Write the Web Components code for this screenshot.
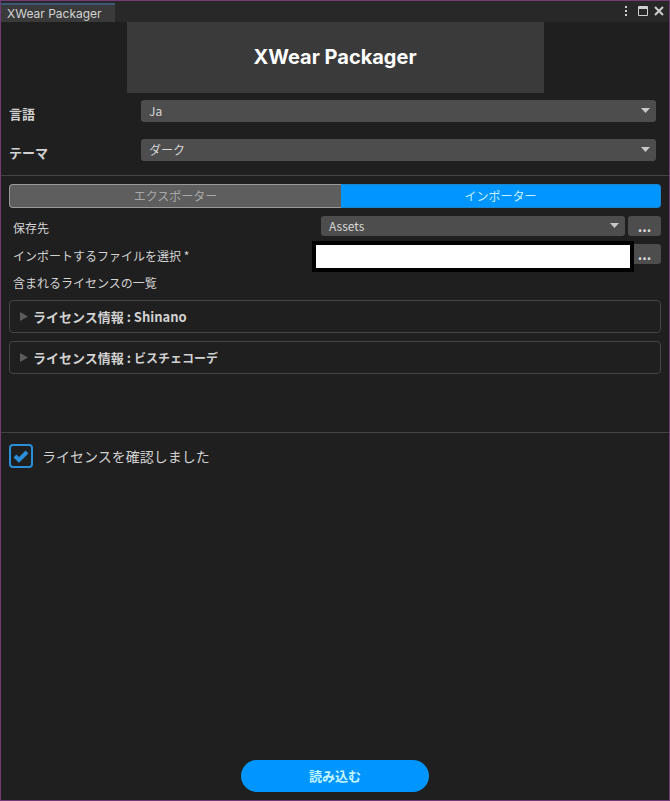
<!DOCTYPE html>
<html lang="ja">
<head>
<meta charset="UTF-8">
<meta name="viewport" content="width=device-width, initial-scale=1.0">
<title>XWear Packager</title>
<style>
    body {
        margin: 0;
        background: #1f1f1f;
        color: #d2d2d2;
        font: 12px/20px "Noto Sans CJK JP", sans-serif;
    }
    .product { font-size: 12px; }
</style>
</head>
<body>
<editor-window title-text="XWear Packager">
    <app-banner>XWear Packager</app-banner>
    <setting-row label="言語" value="Ja"></setting-row>
    <setting-row label="テーマ" value="ダーク"></setting-row>
    <panel-section>
        <mode-tabs></mode-tabs>
        <path-row label="保存先" value="Assets"></path-row>
        <path-row label="インポートするファイルを選択 *" type="file"></path-row>
        <license-list heading="含まれるライセンスの一覧">
            <license-item>ライセンス情報 : Shinano</license-item>
            <license-item>ライセンス情報 : <span class="product">ビスチェコーデ</span></license-item>
        </license-list>
    </panel-section>
    <panel-section>
        <confirm-check>ライセンスを確認しました</confirm-check>
    </panel-section>
    <load-button slot="footer">読み込む</load-button>
</editor-window>

<script>
// shared look of the drop-downs
const selectStyles = `
    .select { position: relative; display: flex; }
    .select::after {
        content: '';
        position: absolute;
        right: 6px;
        top: 50%;
        margin-top: -3px;
        width: 9px;
        height: 5px;
        background: #c8c8c8;
        clip-path: polygon(0 0, 100% 0, 50% 100%);
        pointer-events: none;
    }
    select {
        appearance: none;
        flex: 1;
        min-width: 0;
        margin: 0;
        padding: 0 20px 0 8px;
        border: 0;
        border-radius: 3px;
        background: #4d4d4d;
        color: #d8d8d8;
        font: inherit;
    }
`;

class EditorWindow extends HTMLElement {
    connectedCallback() {
        this.attachShadow({ mode: 'open' });
        this.shadowRoot.innerHTML = `
            <style>
                :host {
                    display: flex;
                    flex-direction: column;
                    box-sizing: border-box;
                    min-height: 100vh;
                    border: 1px solid #733a78;
                }
                header {
                    display: flex;
                    align-items: flex-start;
                    justify-content: space-between;
                    height: 21px;
                    background: #282828;
                }
                .tab {
                    box-sizing: border-box;
                    height: 19px;
                    margin-top: 2px;
                    padding: 0 13px 0 6px;
                    border-top: 2px solid #3c5878;
                    background: #3a3a3a;
                    font: 12px/17px Inter, sans-serif;
                }
                .controls { display: flex; height: 20px; align-items: center; gap: 4px; padding-right: 4px; }
                button { display: flex; padding: 0; border: 0; background: none; color: #cfcfcf; }
                .dots { margin-right: 5px; }
                main { flex: 1; }
                footer { display: flex; justify-content: center; padding: 8px; }
            </style>
            <header>
                <div class="tab">${this.getAttribute('title-text')}</div>
                <div class="controls">
                    <button class="dots" aria-label="Menu">
                        <svg width="4" height="12" fill="currentColor"><path d="M1 1h2v2H1zM1 5h2v2H1zM1 9h2v2H1z"/></svg>
                    </button>
                    <button aria-label="Maximize">
                        <svg width="12" height="12" fill="currentColor" fill-rule="evenodd"><path d="M2 1h8q1 0 1 1v8q0 1-1 1H2q-1 0-1-1V2q0-1 1-1zM2 4v6h8V4z"/></svg>
                    </button>
                    <button aria-label="Close">
                        <svg width="12" height="12" fill="none" stroke="currentColor" stroke-width="2"><path d="M2 2l8 8M10 2l-8 8"/></svg>
                    </button>
                </div>
            </header>
            <main><slot></slot></main>
            <footer><slot name="footer"></slot></footer>
        `;
    }
}

class AppBanner extends HTMLElement {
    connectedCallback() {
        this.attachShadow({ mode: 'open' });
        this.shadowRoot.innerHTML = `
            <style>
                :host { display: flex; justify-content: center; }
                h1 {
                    width: 417px;
                    max-width: 100%;
                    margin: 0;
                    background: #3a3a3a;
                    color: #fff;
                    font: bold 20px/71px Inter, sans-serif;
                    text-align: center;
                }
            </style>
            <h1><slot></slot></h1>
        `;
    }
}

class SettingRow extends HTMLElement {
    connectedCallback() {
        this.attachShadow({ mode: 'open' });
        this.shadowRoot.innerHTML = `
            <style>
                ${selectStyles}
                :host { display: block; padding: 7px 13px 10px 8px; }
                .row { display: flex; }
                label { flex: 0 0 132px; padding-top: 4px; font-size: 13px; font-weight: bold; line-height: 20px; }
                .select { flex: 1; height: 22px; }
                .row { height: 22px; }
            </style>
            <div class="row">
                <label for="field">${this.getAttribute('label')}</label>
                <div class="select">
                    <select id="field"><option>${this.getAttribute('value')}</option></select>
                </div>
            </div>
        `;
    }
}

class PanelSection extends HTMLElement {
    connectedCallback() {
        this.attachShadow({ mode: 'open' });
        this.shadowRoot.innerHTML = `
            <style>
                :host {
                    display: flex;
                    flex-direction: column;
                    gap: 8px;
                    margin-top: 4px;
                    padding: 8px 8px 0;
                    border-top: 1px solid #444;
                }
            </style>
            <slot></slot>
        `;
    }
}

class ModeTabs extends HTMLElement {
    connectedCallback() {
        this.attachShadow({ mode: 'open' });
        this.shadowRoot.innerHTML = `
            <style>
                :host { display: flex; }
                button {
                    flex: 83 1 0;
                    height: 24px;
                    padding: 0;
                    border: 1px solid #999;
                    border-right: 0;
                    border-radius: 4px 0 0 4px;
                    background: #5e5e5e;
                    color: #a8a8a8;
                    font: inherit;
                }
                button.active {
                    flex-grow: 80;
                    border: 1px solid #1a86d0;
                    border-left: 0;
                    border-radius: 0 4px 4px 0;
                    background: #0095ff;
                    color: #c4f0ff;
                }
            </style>
            <button>エクスポーター</button>
            <button class="active">インポーター</button>
        `;
    }
}

class PathRow extends HTMLElement {
    connectedCallback() {
        const isFile = this.getAttribute('type') === 'file';
        this.attachShadow({ mode: 'open' });
        this.shadowRoot.innerHTML = `
            <style>
                ${selectStyles}
                :host { display: flex; height: 20px; }
                label { flex: 77 1 0; padding: 2px 0 0 4px; box-sizing: border-box; white-space: nowrap; }
                .field { flex: 85 1 0; display: flex; gap: 3px; }
                .select, .file { flex: 1; position: relative; }
                /* the file box is taller than its row and lies over the button's edge */
                input {
                    position: absolute;
                    top: -3px;
                    left: -9px;
                    z-index: 1;
                    box-sizing: border-box;
                    width: calc(100% + 18px);
                    height: 31px;
                    padding: 0 4px;
                    border: 4px solid #000;
                    border-radius: 0;
                    background: #fff;
                    font: inherit;
                }
                button {
                    width: 33px;
                    padding: 0;
                    border: 0;
                    border-radius: 3px;
                    background: #4d4d4d;
                    color: #d8d8d8;
                    font: bold 14px/20px "Noto Sans CJK JP", sans-serif;
                }
            </style>
            <label for="field">${this.getAttribute('label')}</label>
            <div class="field">
                ${isFile
                    ? '<div class="file"><input id="field" type="text"></div>'
                    : `<div class="select"><select id="field"><option>${this.getAttribute('value')}</option></select></div>`}
                <button>...</button>
            </div>
        `;
    }
}

class LicenseList extends HTMLElement {
    connectedCallback() {
        this.attachShadow({ mode: 'open' });
        this.shadowRoot.innerHTML = `
            <style>
                :host {
                    display: flex;
                    flex-direction: column;
                    gap: 8px;
                    min-height: 156px;
                }
                h2 { margin: 0; padding: 1px 4px 0; font-size: 12px; font-weight: normal; line-height: 19px; }
            </style>
            <h2>${this.getAttribute('heading')}</h2>
            <slot></slot>
        `;
    }
}

class LicenseItem extends HTMLElement {
    connectedCallback() {
        this.attachShadow({ mode: 'open' });
        this.shadowRoot.innerHTML = `
            <style>
                :host { display: block; border: 1px solid #444; border-radius: 4px; }
                summary {
                    display: flex;
                    align-items: center;
                    gap: 5px;
                    padding: 0 10px;
                    font-size: 13px;
                    font-weight: bold;
                    line-height: 31px;
                    cursor: pointer;
                }
                summary::before {
                    content: '';
                    width: 8px;
                    height: 9px;
                    background: #5c5c5c;
                    clip-path: polygon(0 0, 100% 50%, 0 100%);
                }
                details[open] summary::before { transform: rotate(90deg); }
            </style>
            <details><summary><span><slot></slot></span></summary></details>
        `;
    }
}

class ConfirmCheck extends HTMLElement {
    connectedCallback() {
        this.attachShadow({ mode: 'open' });
        this.shadowRoot.innerHTML = `
            <style>
                :host { display: block; padding-top: 3px; }
                label { display: flex; align-items: center; gap: 9px; font-size: 14px; line-height: 24px; }
                .box { display: grid; }
                input, svg { grid-area: 1 / 1; }
                input {
                    appearance: none;
                    box-sizing: border-box;
                    width: 24px;
                    height: 24px;
                    margin: 0;
                    border: 2px solid #2a8fd8;
                    border-radius: 4px;
                }
                svg { visibility: hidden; pointer-events: none; }
                input:checked + svg { visibility: visible; }
            </style>
            <label>
                <span class="box">
                    <input type="checkbox" checked>
                    <svg width="24" height="24" fill="none" stroke="#2a8fd8" stroke-width="4"><path d="M6 12l4 4 8-8"/></svg>
                </span>
                <span><slot></slot></span>
            </label>
        `;
    }
}

class LoadButton extends HTMLElement {
    connectedCallback() {
        this.attachShadow({ mode: 'open' });
        this.shadowRoot.innerHTML = `
            <style>
                :host { display: block; }
                button {
                    width: 188px;
                    height: 32px;
                    padding: 0;
                    border: 0;
                    border-radius: 16px;
                    background: #0095ff;
                    color: #c4f6ff;
                    font: bold 13px/32px "Noto Sans CJK JP", sans-serif;
                    display: block;
                }
            </style>
            <button><slot></slot></button>
        `;
    }
}

customElements.define('editor-window', EditorWindow);
customElements.define('app-banner', AppBanner);
customElements.define('setting-row', SettingRow);
customElements.define('panel-section', PanelSection);
customElements.define('mode-tabs', ModeTabs);
customElements.define('path-row', PathRow);
customElements.define('license-list', LicenseList);
customElements.define('license-item', LicenseItem);
customElements.define('confirm-check', ConfirmCheck);
customElements.define('load-button', LoadButton);
</script>
</body>
</html>
